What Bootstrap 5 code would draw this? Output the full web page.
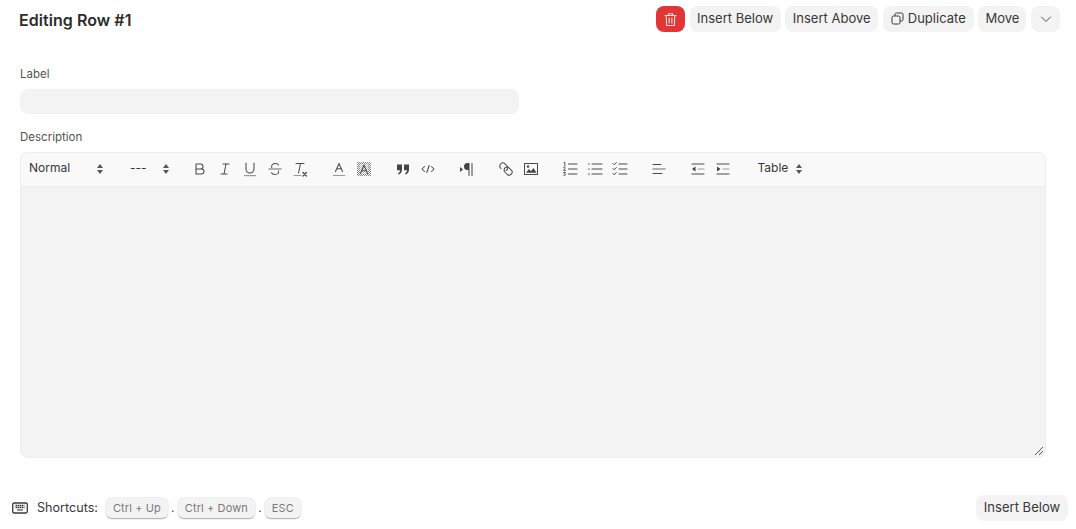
<!doctype html>
<html lang="en"><head><meta charset="utf-8"><title>Editing Row</title>
<link href="https://cdn.jsdelivr.net/npm/bootstrap@5.3.0/dist/css/bootstrap.min.css" rel="stylesheet">
<style>
html,body{height:529px;overflow:hidden;background:#fff}
body{font-family:Inter,"Noto Sans",sans-serif;font-size:13px;color:#383838}
.pane{height:529px}
.head-bar{padding:6px 16px 0 19px;height:32px}
.head-title{font-size:16px;font-weight:600;color:#2c2c2c;letter-spacing:.05px;margin:0;line-height:28px}
.act{background:#f3f3f3;border:0;border-radius:8px;height:26px;padding:0 0 1px;font-size:13px;color:#383838;line-height:25px;white-space:nowrap;letter-spacing:.02px;text-align:center}
.act-danger{background:#e03636;width:29px;padding:0;color:#fff}
.act-chev{width:29px;padding:0;color:#525252}
.w-below{width:91px}.w-above{width:93px}.w-dup{width:91px}.w-move{width:48px}.w-foot{width:92px}
.acts{gap:4.6px}
.form-zone{padding:34px 30px 0 20px}
.fld-label{font-size:11.5px;line-height:16px;color:#525252;margin-bottom:7px;display:block}
.fld-input{display:block;width:499px;height:25px;background:#f3f3f3;border:0;border-radius:8px;margin-bottom:15px}
.ed{border:1px solid #ededed;border-radius:8px;height:306px;overflow:hidden;background:#f3f3f3;position:relative}
.tb{height:34px;background:#f9f9f9;border-bottom:1px solid #ededed;padding-left:8px;font-size:12px;color:#383838}
.pick{display:flex;align-items:center;justify-content:space-between;height:28px;line-height:28px}
.pick span{position:relative;top:-2px}
.pick svg{position:relative;top:-1px}
.pick1{width:74px;margin-right:27px}
.pick2{width:38.5px;margin-right:19px}
.pick3{width:44.5px;margin-left:8px}
.grp{display:flex;margin-right:14px}
.tbtn{width:25px;height:32px;margin-top:-1px;display:flex;align-items:center;justify-content:center}
.tbtn svg{width:18px;height:18px;fill:none;stroke:#4a4a4a;stroke-width:1.05;stroke-linecap:round;stroke-linejoin:round}
.tbtn svg .f{fill:#444;stroke:none}
.tbtn svg .soft{stroke:#999}
.updn{width:6px;height:10px;fill:#555}
.grip{position:absolute;right:1px;bottom:1px;width:10px;height:10px;stroke:#555;stroke-width:1}
.foot{padding:37px 8px 0 12px}
.sc{font-size:12px;line-height:16px}
.sc-label{margin:0 8px 0 9px;color:#383838;font-size:12.6px}
.key{background:#f3f3f3;border:0;border-bottom:1px solid #b8b8b8;box-shadow:0 0 0 .5px #e2e2e2;border-radius:6px;height:21px;line-height:21px;padding:0 7px;font-size:11px;color:#7a7a7a;font-family:Inter,sans-serif;letter-spacing:.1px}
.dot{width:10px;text-align:center;font-size:12px}
.kb-ico{width:16px;height:12px}
</style></head><body>
<div class="pane d-flex flex-column">
<div class="head-bar d-flex justify-content-between align-items-start">
<h1 class="head-title">Editing Row #1</h1>
<div class="acts d-flex">
<button class="act act-danger d-flex align-items-center justify-content-center" aria-label="Delete"><svg width="15" height="15" viewBox="0 0 14 14" fill="none" stroke="#fff" stroke-width="1" stroke-linecap="round" stroke-linejoin="round" opacity=".85"><path d="M1.800 3.200h10.400M5 3V1.600h4V3M3 3.200l.4 9.400h7.200l.4-9.400M5.700 5.600v4.600M8.300 5.600v4.600"/></svg></button>
<button class="act w-below">Insert Below</button>
<button class="act w-above">Insert Above</button>
<button class="act w-dup d-flex align-items-center justify-content-center gap-1"><svg width="13" height="13" viewBox="0 0 13 13" fill="none" stroke="#383838" stroke-width="1"><rect x="1" y="4" width="8" height="8" rx="1.500"/><path d="M4 4V2.500A1.500 1.500 0 0 1 5.500 1h5A1.500 1.500 0 0 1 12 2.500v5A1.500 1.500 0 0 1 10.500 9H9"/></svg>Duplicate</button>
<button class="act w-move">Move</button>
<button class="act act-chev d-flex align-items-center justify-content-center" aria-label="More"><svg width="12" height="12" viewBox="0 0 12 12" fill="none" stroke="#525252" stroke-width="1" stroke-linecap="round" stroke-linejoin="round"><path d="M1.500 4l4.500 4.500L10.500 4"/></svg></button>
</div></div>
<div class="form-zone">
<label class="fld-label">Label</label>
<input class="fld-input" type="text" aria-label="Label">
<label class="fld-label">Description</label>
<div class="ed">
<div class="tb d-flex align-items-center">
<div class="pick pick1"><span>Normal</span><svg class="updn" viewBox="0 0 6 10"><path d="M3 0l3 4H0zM3 10L0 6h6z"/></svg></div>
<div class="pick pick2"><span>---</span><svg class="updn" viewBox="0 0 6 10"><path d="M3 0l3 4H0zM3 10L0 6h6z"/></svg></div>
<div class="grp">
<div class="tbtn"><svg viewBox="0 0 18 18"><path d="M5 4h4.500a2.500 2.500 0 0 1 0 5H5zM5 9h5.500a2.500 2.500 0 0 1 0 5H5z"/></svg></div>
<div class="tbtn"><svg viewBox="0 0 18 18"><path d="M7 4h6M5 14h6M8 14l2-10"/></svg></div>
<div class="tbtn"><svg viewBox="0 0 18 18"><path d="M5 3v6a4 4 0 0 0 8 0V3"/><rect x="3" y="15" width="12" height="1.200" fill="#999" stroke="none"/></svg></div>
<div class="tbtn"><svg viewBox="0 0 18 18"><path d="M5.800 7.500C5 5.500 6.500 3.500 9.500 3.500c1.500 0 2.600.5 3 1.500M12.500 11c.6 2-1 3.500-3.500 3.500-1.700 0-3-.6-3.500-1.800"/><path class="soft" d="M3 9h12" stroke-width="1.500"/></svg></div>
<div class="tbtn"><svg viewBox="0 0 18 18"><path d="M5 3.500h8M9.500 3.500L7.500 13"/><path class="soft" d="M3 15.500h7"/><path d="M12 12.500l3.500 3.500M15.500 12.500L12 16" stroke-width="1.300"/></svg></div>
</div>
<div class="grp">
<div class="tbtn"><svg viewBox="0 0 18 18"><path d="M5.500 11.500L9 3.500l3.500 8M6.700 8.800h4.600"/><rect x="3" y="15" width="12" height="1" fill="#999" stroke="none"/></svg></div>
<div class="tbtn"><svg viewBox="0 0 18 18"><defs><pattern id="chk" width="2" height="2" patternUnits="userSpaceOnUse"><rect class="f" width="1" height="1"/><rect class="f" x="1" y="1" width="1" height="1"/></pattern></defs><rect x="2" y="2" width="14" height="14" fill="url(#chk)" stroke="none" opacity=".65"/><rect x="5" y="4" width="8" height="10" fill="#f9f9f9" stroke="none" opacity=".5"/><path d="M5.500 13.500L9 5l3.500 8.500M6.700 10.800h4.600"/></svg></div>
</div>
<div class="grp">
<div class="tbtn"><svg viewBox="0 0 18 18"><path class="f" d="M3 4.500h5v5c0 2.800-1.200 4.300-3.500 5l-.5-1.300C5.300 12.800 6 12 6 10.300H3zM10 4.500h5v5c0 2.800-1.200 4.300-3.500 5l-.5-1.300c1.300-.4 2-1.200 2-2.900h-3z"/></svg></div>
<div class="tbtn"><svg viewBox="0 0 18 18"><path d="M5.500 6.500L3 9l2.500 2.500M12.500 6.500L15 9l-2.500 2.500M10.200 5.500L7.800 12.500"/></svg></div>
</div>
<div class="grp">
<div class="tbtn"><svg viewBox="0 0 18 18"><path class="f" d="M2 7l3 2.500L2 12z"/><path d="M11 3.500v12M14 3.500v12"/><path class="f" d="M14.500 3h-5a3.500 3.500 0 0 0 0 7H11V3z"/></svg></div>
</div>
<div class="grp">
<div class="tbtn"><svg viewBox="0 0 18 18"><path d="M3.800 3.800a3 3 0 0 1 4.200 0l2 2a3 3 0 0 1-1 4.700M4 8.500a3 3 0 0 1-.2-4.700"/><path d="M8.500 7.500a3 3 0 0 1 3-.2l3 3a3 3 0 0 1-4.200 4.200l-2.500-2.500a3 3 0 0 1 .7-4.500z"/></svg></div>
<div class="tbtn"><svg viewBox="0 0 18 18"><rect x="2.500" y="3.500" width="13" height="11"/><path class="f" d="M4 12.800l3-3.800 2 2.200 2.500-3.200 3 4.800z"/><circle class="f" cx="6" cy="6.500" r="1.200"/></svg></div>
</div>
<div class="grp">
<div class="tbtn"><svg viewBox="0 0 18 18"><path d="M7.500 4h8.500M7.500 9h8.500M7.500 14h8.500"/><path d="M3 2.500l.8-.4v3.900M2.500 7.500c1-.8 2-.2 1.600.8L2.500 10.500h2M2.500 12.500h2l-1 1.200c1.200 0 1.300 1 .9 1.400-.4.400-1.400.4-1.900.1" stroke-width=".9"/></svg></div>
<div class="tbtn"><svg viewBox="0 0 18 18"><path d="M6 4h10M6 9h10M6 14h10M2.500 4h.8M2.500 9h.8M2.500 14h.8"/></svg></div>
<div class="tbtn"><svg viewBox="0 0 18 18"><path d="M8 4h8M8 9h8M8 14h8"/><path d="M2 3.500l1.200 1.300L5.300 2.500M2 8.500l1.200 1.300L5.300 7.500M2 13.500l1.200 1.300 2.100-2.300" stroke-width="1"/></svg></div>
</div>
<div class="grp">
<div class="tbtn"><svg viewBox="0 0 18 18"><path d="M3 4.500h8M3 13.500h9"/><path class="soft" d="M3 9h12" stroke-width="1.500"/></svg></div>
</div>
<div class="grp">
<div class="tbtn"><svg viewBox="0 0 18 18"><path d="M3 4h12M3 14h12"/><path class="soft" d="M9 9h6"/><path class="f" d="M6.500 6.500v5L3 9z"/></svg></div>
<div class="tbtn"><svg viewBox="0 0 18 18"><path d="M3 4h12M3 14h12"/><path class="soft" d="M9 9h6"/><path class="f" d="M3 6.500v5L6.500 9z"/></svg></div>
</div>
<div class="pick pick3"><span>Table</span><svg class="updn" viewBox="0 0 6 10"><path d="M3 0l3 4H0zM3 10L0 6h6z"/></svg></div>
</div>
<svg class="grip" viewBox="0 0 10 10"><path d="M1 9l8-8M5 9l4-4"/></svg>
</div></div>
<div class="foot d-flex justify-content-between align-items-center">
<div class="sc d-flex align-items-center">
<svg class="kb-ico" viewBox="0 0 16 12" fill="none" stroke="#383838" aria-hidden="true"><rect x=".7" y="1" width="14.600" height="10" rx="1.500" stroke-width="1.300"/><path d="M3.500 3.500h9M3.500 5.500h9" stroke-width="1.300" stroke-dasharray="1.500 .5"/><path d="M5 8h6" stroke-width="1.100"/></svg>
<span class="sc-label">Shortcuts:</span>
<kbd class="key">Ctrl + Up</kbd><span class="dot">.</span><kbd class="key">Ctrl + Down</kbd><span class="dot">.</span><kbd class="key">ESC</kbd>
</div>
<button class="act w-foot">Insert Below</button>
</div>
</div>
</body></html>
